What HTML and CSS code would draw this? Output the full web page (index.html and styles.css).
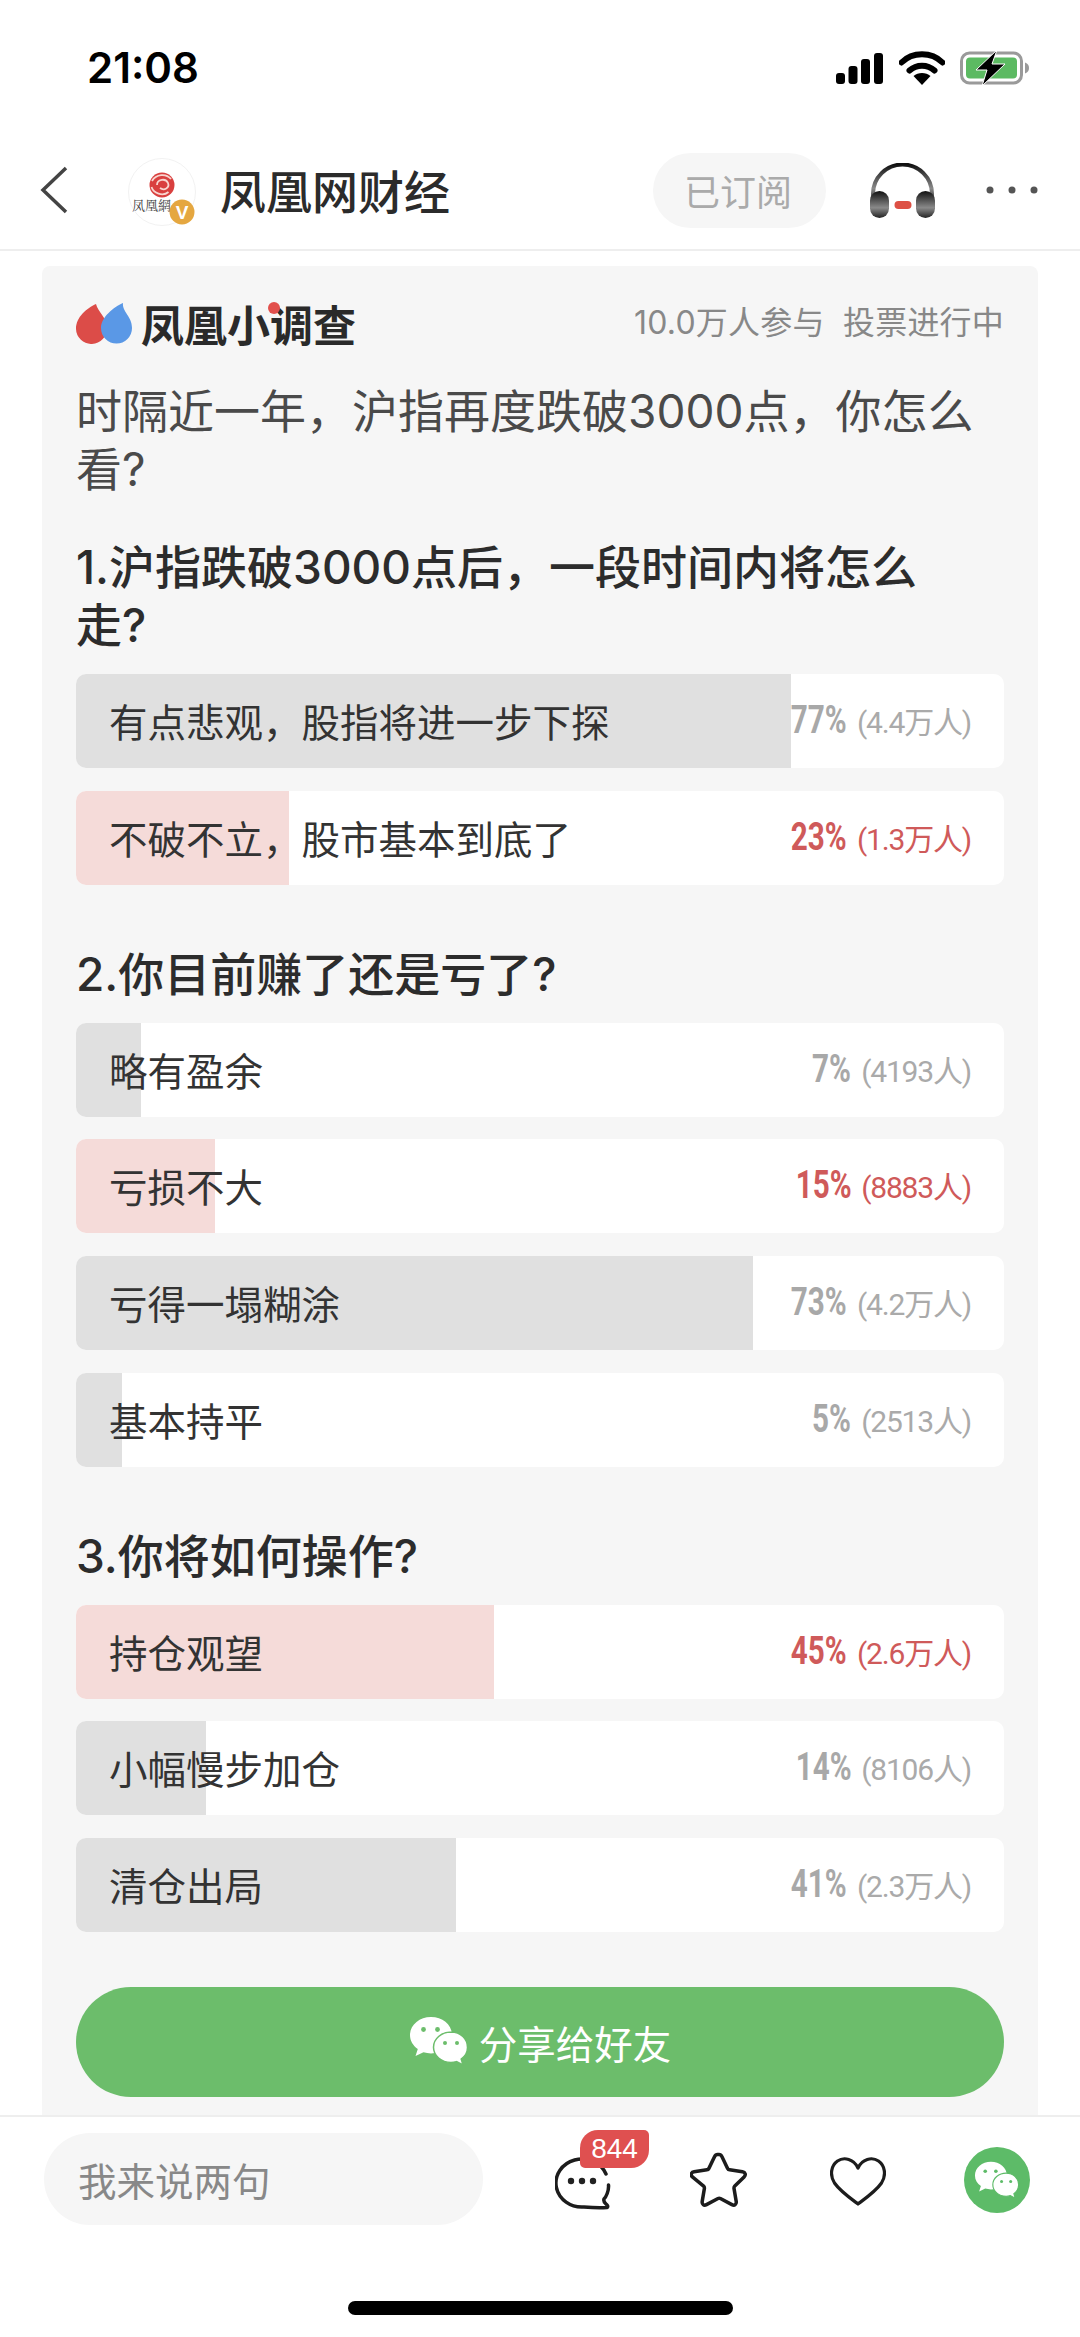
FILE: index.html
```html
<!DOCTYPE html>
<html lang="zh-CN">
<head>
<meta charset="utf-8">
<title>凤凰网财经</title>
<link rel="stylesheet" href="styles.css">
</head>
<body>
<svg class="defs" width="0" height="0" aria-hidden="true">
  <defs>
    <symbol id="wechat" viewBox="0 0 60 50">
      <path fill="#fff" d="M22 1C10.400 1 1 9 1 19c0 5.700 3 10.700 7.800 14L6.500 40l8-3.700c2.400.7 4.900 1.100 7.500 1.100 11.600 0 21-8.200 21-18.400S33.600 1 22 1z"/>
      <path fill="#fff" stroke="currentColor" stroke-width="1.500" d="M42 16c-9.700 0-17.500 6.800-17.500 15.200S32.300 46.400 42 46.400c1.900 0 3.800-.3 5.500-.8l6.500 3.400-1.800-6c3.900-2.800 6.300-7 6.300-11.600C58.500 22.800 51.700 16 42 16z"/>
      <circle cx="14.500" cy="13.500" r="2.400" fill="currentColor"/>
      <circle cx="28.500" cy="13.500" r="2.400" fill="currentColor"/>
      <circle cx="36" cy="27" r="2" fill="currentColor"/>
      <circle cx="48" cy="27" r="2" fill="currentColor"/>
    </symbol>
  </defs>
</svg>
<div class="page">
  <header class="status">
    <span class="time">21:08</span>
    <div class="status-icons">
      <svg class="signal" viewBox="0 0 47 31" width="47" height="31">
        <rect x="0" y="20" width="9" height="11" rx="3"/>
        <rect x="12.500" y="13" width="9" height="18" rx="3"/>
        <rect x="25" y="6" width="9" height="25" rx="3"/>
        <rect x="38" y="0" width="9" height="31" rx="3"/>
      </svg>
      <svg class="wifi" viewBox="0 0 46 34" width="46" height="34">
        <path d="M2.500 11.500C13.500 .5 32.500 .5 43.500 11.500" fill="none" stroke="#000" stroke-width="6" stroke-linecap="round"/>
        <path d="M10.500 19.500c7-6.500 18-6.500 25 0" fill="none" stroke="#000" stroke-width="6" stroke-linecap="round"/>
        <path d="M23 34l-8.500-9c4.500-4 12.500-4 17 0z"/>
      </svg>
      <svg class="battery" viewBox="0 0 70 36" width="70" height="36">
        <rect x="1.500" y="3" width="60" height="30" rx="8" fill="none" stroke="#9a9a9a" stroke-width="3"/>
        <rect x="6" y="7.500" width="51" height="21" rx="4" fill="#5cba62"/>
        <path d="M65 12.500c3 1 4 3 4 5.500s-1 4.500-4 5.500z" fill="#9a9a9a"/>
        <path d="M37 0L16 20h11l-5 16 23-22H32z" stroke="#fff" stroke-width="1"/>
      </svg>
    </div>
  </header>

  <nav class="nav">
    <svg class="back" viewBox="0 0 28 48" width="28" height="48">
      <path d="M26 2L3 24l23 22" fill="none" stroke="#444" stroke-width="3.500"/>
    </svg>
    <svg class="avatar" viewBox="0 0 72 70" width="72" height="70">
      <circle cx="36" cy="34" r="33.500" fill="#fff" stroke="#f2f2f2"/>
      <circle cx="36" cy="27" r="12.500" fill="#d9403f"/>
      <path d="M26 23c4-7 14-8 19-2M25.500 29c2 6 11 10 17 5M31 27c0-6 9-7 11-2s-4 8-8 5" fill="none" stroke="#f8d6d0" stroke-width="1.800"/>
      <text x="6" y="52" class="avatar-text">凤凰網</text>
      <circle cx="56" cy="54" r="12.500" fill="#e5a740"/>
      <text x="56" y="61" class="avatar-v">V</text>
    </svg>
    <h1 class="nav-title">凤凰网财经</h1>
    <span class="subscribed">已订阅</span>
    <svg class="headphones" viewBox="0 0 65 55" width="65" height="55">
      <defs>
        <linearGradient id="hp" x1="0" y1="0" x2="0" y2="1">
          <stop offset="0" stop-color="#111"/>
          <stop offset=".62" stop-color="#8a8a8a"/>
          <stop offset="1" stop-color="#222"/>
        </linearGradient>
      </defs>
      <path d="M3 40V31a29.500 29.500 0 0 1 59 0v9" fill="none" stroke="url(#hp)" stroke-width="4"/>
      <rect x="0" y="28" width="19" height="27" rx="9.500" fill="url(#hp)"/>
      <rect x="46" y="28" width="19" height="27" rx="9.500" fill="url(#hp)"/>
      <rect x="24.500" y="38" width="17" height="8" rx="4" fill="#dd5044"/>
    </svg>
    <svg class="more" viewBox="0 0 52 8" width="52" height="8">
      <circle cx="4" cy="4" r="3.500"/><circle cx="26" cy="4" r="3.500"/><circle cx="48" cy="4" r="3.500"/>
    </svg>
  </nav>

  <main class="main">
    <section class="card">
      <div class="card-head">
        <div class="brand">
          <svg class="drops" viewBox="0 0 56 42" width="56" height="42">
            <path d="M20 2c2 8 11 14 11 24A15.500 15.500 0 0 1 0 27C0 15 11 6 20 2z" fill="#dc4c48"/>
            <path d="M47 1c-1 9 9 13 9 25a15.500 15.500 0 0 1-31 0C25 15 38 5 47 1z" fill="#5a98e6"/>
          </svg>
          <span class="brand-name">凤凰小调查<i class="brand-dot"></i></span>
        </div>
        <span class="stats">10.0万人参与&nbsp;&nbsp;投票进行中</span>
      </div>

      <h2 class="poll-title">时隔近一年，沪指再度跌破3000点，你怎么看?</h2>

      <h3 class="question question-first">1.沪指跌破3000点后，一段时间内将怎么走?</h3>
      <ul class="options">
        <li class="option"><span class="fill" style="width:77%"></span><span class="label">有点悲观，股指将进一步下探</span><span class="result"><b>77%</b><small>(4.4万人)</small></span></li>
        <li class="option picked"><span class="fill" style="width:23%"></span><span class="label">不破不立，股市基本到底了</span><span class="result"><b>23%</b><small>(1.3万人)</small></span></li>
      </ul>

      <h3 class="question">2.你目前赚了还是亏了?</h3>
      <ul class="options">
        <li class="option"><span class="fill" style="width:7%"></span><span class="label">略有盈余</span><span class="result"><b>7%</b><small>(4193人)</small></span></li>
        <li class="option picked"><span class="fill" style="width:15%"></span><span class="label">亏损不大</span><span class="result"><b>15%</b><small>(8883人)</small></span></li>
        <li class="option"><span class="fill" style="width:73%"></span><span class="label">亏得一塌糊涂</span><span class="result"><b>73%</b><small>(4.2万人)</small></span></li>
        <li class="option"><span class="fill" style="width:5%"></span><span class="label">基本持平</span><span class="result"><b>5%</b><small>(2513人)</small></span></li>
      </ul>

      <h3 class="question">3.你将如何操作?</h3>
      <ul class="options">
        <li class="option picked"><span class="fill" style="width:45%"></span><span class="label">持仓观望</span><span class="result"><b>45%</b><small>(2.6万人)</small></span></li>
        <li class="option"><span class="fill" style="width:14%"></span><span class="label">小幅慢步加仓</span><span class="result"><b>14%</b><small>(8106人)</small></span></li>
        <li class="option"><span class="fill" style="width:41%"></span><span class="label">清仓出局</span><span class="result"><b>41%</b><small>(2.3万人)</small></span></li>
      </ul>

      <button class="share" type="button">
        <svg class="share-icon" width="60" height="50"><use href="#wechat"/></svg>
        <span>分享给好友</span>
      </button>
    </section>
  </main>

  <footer class="bottom">
    <div class="bottom-row">
      <div class="comment-input">我来说两句</div>
      <div class="comment-btn">
        <svg viewBox="0 0 56 56" width="56" height="56">
          <path d="M51 20a26 24 0 1 0-22 33c6 .5 15 1 23 .5 1-.3 1-1.500 0-2.500-2-2-4-3-3-6 2-2 5-8 4.500-14" fill="none" stroke="#1c1c1c" stroke-width="3.500" stroke-linecap="round"/>
          <circle cx="16" cy="27" r="3.200" fill="#222"/><circle cx="27" cy="27" r="3.200" fill="#222"/><circle cx="38" cy="27" r="3.200" fill="#222"/>
        </svg>
        <span class="badge">844</span>
      </div>
      <svg class="star" viewBox="0 0 58 56" width="58" height="56">
        <path d="M29 2.500c1.500 0 2.400 1 3 2.200l5.600 11.700c.4.800 1 1.300 2 1.400l12.800 2c3 .5 3.800 3 1.700 5.100l-9.300 9.200c-.7.700-.9 1.400-.8 2.300l2.200 13c.5 3-1.700 4.600-4.300 3.200l-11.500-6.100c-.9-.4-1.500-.4-2.400 0l-11.500 6.100c-2.600 1.400-4.800-.2-4.300-3.200l2.200-13c.1-.9-.1-1.600-.8-2.300L2.400 24.900c-2.100-2.100-1.300-4.600 1.700-5.100l12.800-2c1-.1 1.600-.6 2-1.400L24.500 4.700c.6-1.200 1.500-2.200 3-2.200z" fill="none" stroke="#1c1c1c" stroke-width="3.500" stroke-linejoin="round"/>
      </svg>
      <svg class="heart" viewBox="0 0 56 50" width="56" height="50">
        <path d="M28 12C24 3 14 .5 7.500 5S-.5 19 4.500 27C10 35 20 42 28 48c8-6 18-13 23.500-21 5-8 3.500-17.500-3-22S32 3 28 12z" fill="none" stroke="#1c1c1c" stroke-width="3.200" stroke-linejoin="round"/>
      </svg>
      <div class="wechat-btn"><svg width="46" height="38"><use href="#wechat"/></svg></div>
    </div>
    <div class="home-bar"></div>
  </footer>
</div>
</body>
</html>
```

FILE: styles.css
```css
* { box-sizing: border-box; }
html, body { margin: 0; padding: 0; background: #fff; }
body {
  font-family: "Noto Sans CJK SC", "Noto Sans", sans-serif;
  color: #333;
}
.defs { position: absolute; }
.page {
  width: 1080px;
  height: 2337px;
  display: flex;
  flex-direction: column;
  overflow: hidden;
}

/* status bar */
.status {
  height: 136px;
  flex: none;
  display: flex;
  align-items: center;
  justify-content: space-between;
  padding: 0 50px 0 87px;
}
.time {
  font-family: Inter, "Liberation Sans", sans-serif;
  font-size: 42px;
  font-weight: 600;
  color: #000;
  line-height: 1;
}
.status-icons { display: flex; align-items: center; gap: 15px; }
.signal { margin-right: 1px; }

/* nav */
.nav {
  height: 115px;
  flex: none;
  display: flex;
  align-items: center;
  border-bottom: 2px solid #eee;
  padding: 0 0 5px 40px;
}
.back { flex: none; }
.avatar { flex: none; margin: 5px 0 0 58px; }
.avatar-text { font-family: "Noto Serif CJK SC", "Liberation Serif", "Noto Sans CJK SC", serif; font-size: 13px; fill: #444; }
.avatar-v { font-family: "Liberation Sans", sans-serif; font-size: 19px; font-weight: 700; fill: #fff; text-anchor: middle; }
.nav-title {
  margin: 0 0 0 22px;
  font-size: 46px;
  font-weight: 500;
  color: #2b2b2b;
  line-height: 1.2;
  width: 433px;
  flex: none;
}
.subscribed {
  width: 173px;
  height: 75px;
  flex: none;
  border-radius: 38px;
  background: #f6f6f6;
  color: #aaa;
  font-size: 36px;
  line-height: 1;
  padding-right: 3px;
  display: flex;
  align-items: center;
  justify-content: center;
}
.headphones { flex: none; margin: 0 0 0 44px; }
.more { flex: none; margin: 0 0 0 51px; fill: #555; }

/* card */
.main { flex: 1; min-height: 0; overflow: hidden; padding: 15px 42px 0; }
.card {
  background: #f6f6f6;
  border-radius: 8px 8px 0 0;
  padding: 36px 34px 17px;
  height: 100%;
}
.card-head { display: flex; align-items: center; justify-content: space-between; height: 42px; }
.brand { display: flex; align-items: center; gap: 9px; }
.brand-name {
  position: relative;
  font-size: 43px;
  font-weight: 700;
  line-height: 42px;
  color: #2a2a2a;
}
.brand-dot {
  position: absolute;
  left: 127px;
  top: 0;
  width: 12px;
  height: 12px;
  border-radius: 50%;
  background: #e2504c;
}
.stats { font-family: Inter, "Noto Sans CJK SC", sans-serif; font-size: 32px; letter-spacing: .2px; color: #888; line-height: 42px; }
.poll-title {
  margin: 38px 0 0;
  font-family: Inter, "Noto Sans CJK SC", sans-serif;
  font-size: 46px;
  font-weight: 400;
  line-height: 58px;
  color: #4a4a4a;
}
.question {
  margin: 60px 0 20px;
  padding-right: 60px;
  font-family: Inter, "Noto Sans CJK SC", sans-serif;
  font-size: 46px;
  font-weight: 500;
  line-height: 58px;
  color: #2c2c2c;
}
.question-first { margin-top: 40px; }
.options { list-style: none; margin: 0; padding: 0; display: flex; flex-direction: column; gap: 22.700px; }
.option {
  position: relative;
  height: 94px;
  display: flex;
  align-items: center;
  justify-content: space-between;
  padding: 0 33px 0 33px;
  background: #fff;
  border-radius: 10px;
  overflow: hidden;
}
.fill { position: absolute; left: 0; top: 0; bottom: 0; background: #e0e0e0; }
.picked .fill { background: #f5dbd9; }
.label { position: relative; top: -1px; font-size: 38.500px; color: #333; }
.result {
  position: relative;
  top: -1px;
  display: flex;
  align-items: center;
  gap: 10px;
  color: #a8a8a8;
  font-family: Roboto, "Noto Sans CJK SC", sans-serif;
  white-space: nowrap;
}
.result b {
  display: inline-block;
  font-size: 38px;
  font-weight: 700;
  margin-left: -12px;
  transform: scaleX(.78);
  transform-origin: right center;
}
.result small { font-size: 30px; font-weight: 400; letter-spacing: -1.200px; color: #aaa; }
.picked .result, .picked .result small { color: #cf5a5a; }
.share {
  width: 100%;
  height: 110px;
  margin-top: 55px;
  border: 0;
  border-radius: 55px;
  background: #6cbd6b;
  color: #fff;
  font-family: inherit;
  font-size: 38.500px;
  display: flex;
  align-items: center;
  justify-content: center;
  gap: 10px;
}
.share-icon { color: #6cbd6b; margin-top: -2px; }

/* bottom */
.bottom { height: 222px; flex: none; border-top: 2px solid #eee; background: #fff; position: relative; }
.bottom-row { display: flex; align-items: center; height: 92px; margin-top: 16px; padding-left: 44px; }
.comment-input {
  width: 439px;
  height: 92px;
  flex: none;
  border-radius: 46px;
  background: #f6f6f6;
  color: #888;
  font-size: 38.500px;
  display: flex;
  align-items: center;
  padding-left: 34px;
}
.comment-btn { position: relative; width: 56px; height: 56px; flex: none; margin: 6px 0 0 72px; }
.comment-btn svg { display: block; }
.badge {
  position: absolute;
  left: 25px;
  top: -24px;
  width: 69px;
  height: 38px;
  background: #df5050;
  color: #fff;
  font-family: "Liberation Sans", sans-serif;
  font-size: 28px;
  line-height: 38px;
  text-align: center;
  border-radius: 18px 5px 18px 5px;
}
.star { flex: none; margin: 2px 0 0 79px; }
.heart { flex: none; margin: 4px 0 0 82px; }
.wechat-btn {
  width: 66px;
  height: 66px;
  flex: none;
  margin: 2px 0 0 78px;
  border-radius: 50%;
  background: #5dbb68;
  color: #5dbb68;
  display: flex;
  align-items: center;
  justify-content: center;
}
.home-bar {
  width: 385px;
  height: 14px;
  border-radius: 7px;
  background: #000;
  margin: 76px 0 0 348px;
}
```
